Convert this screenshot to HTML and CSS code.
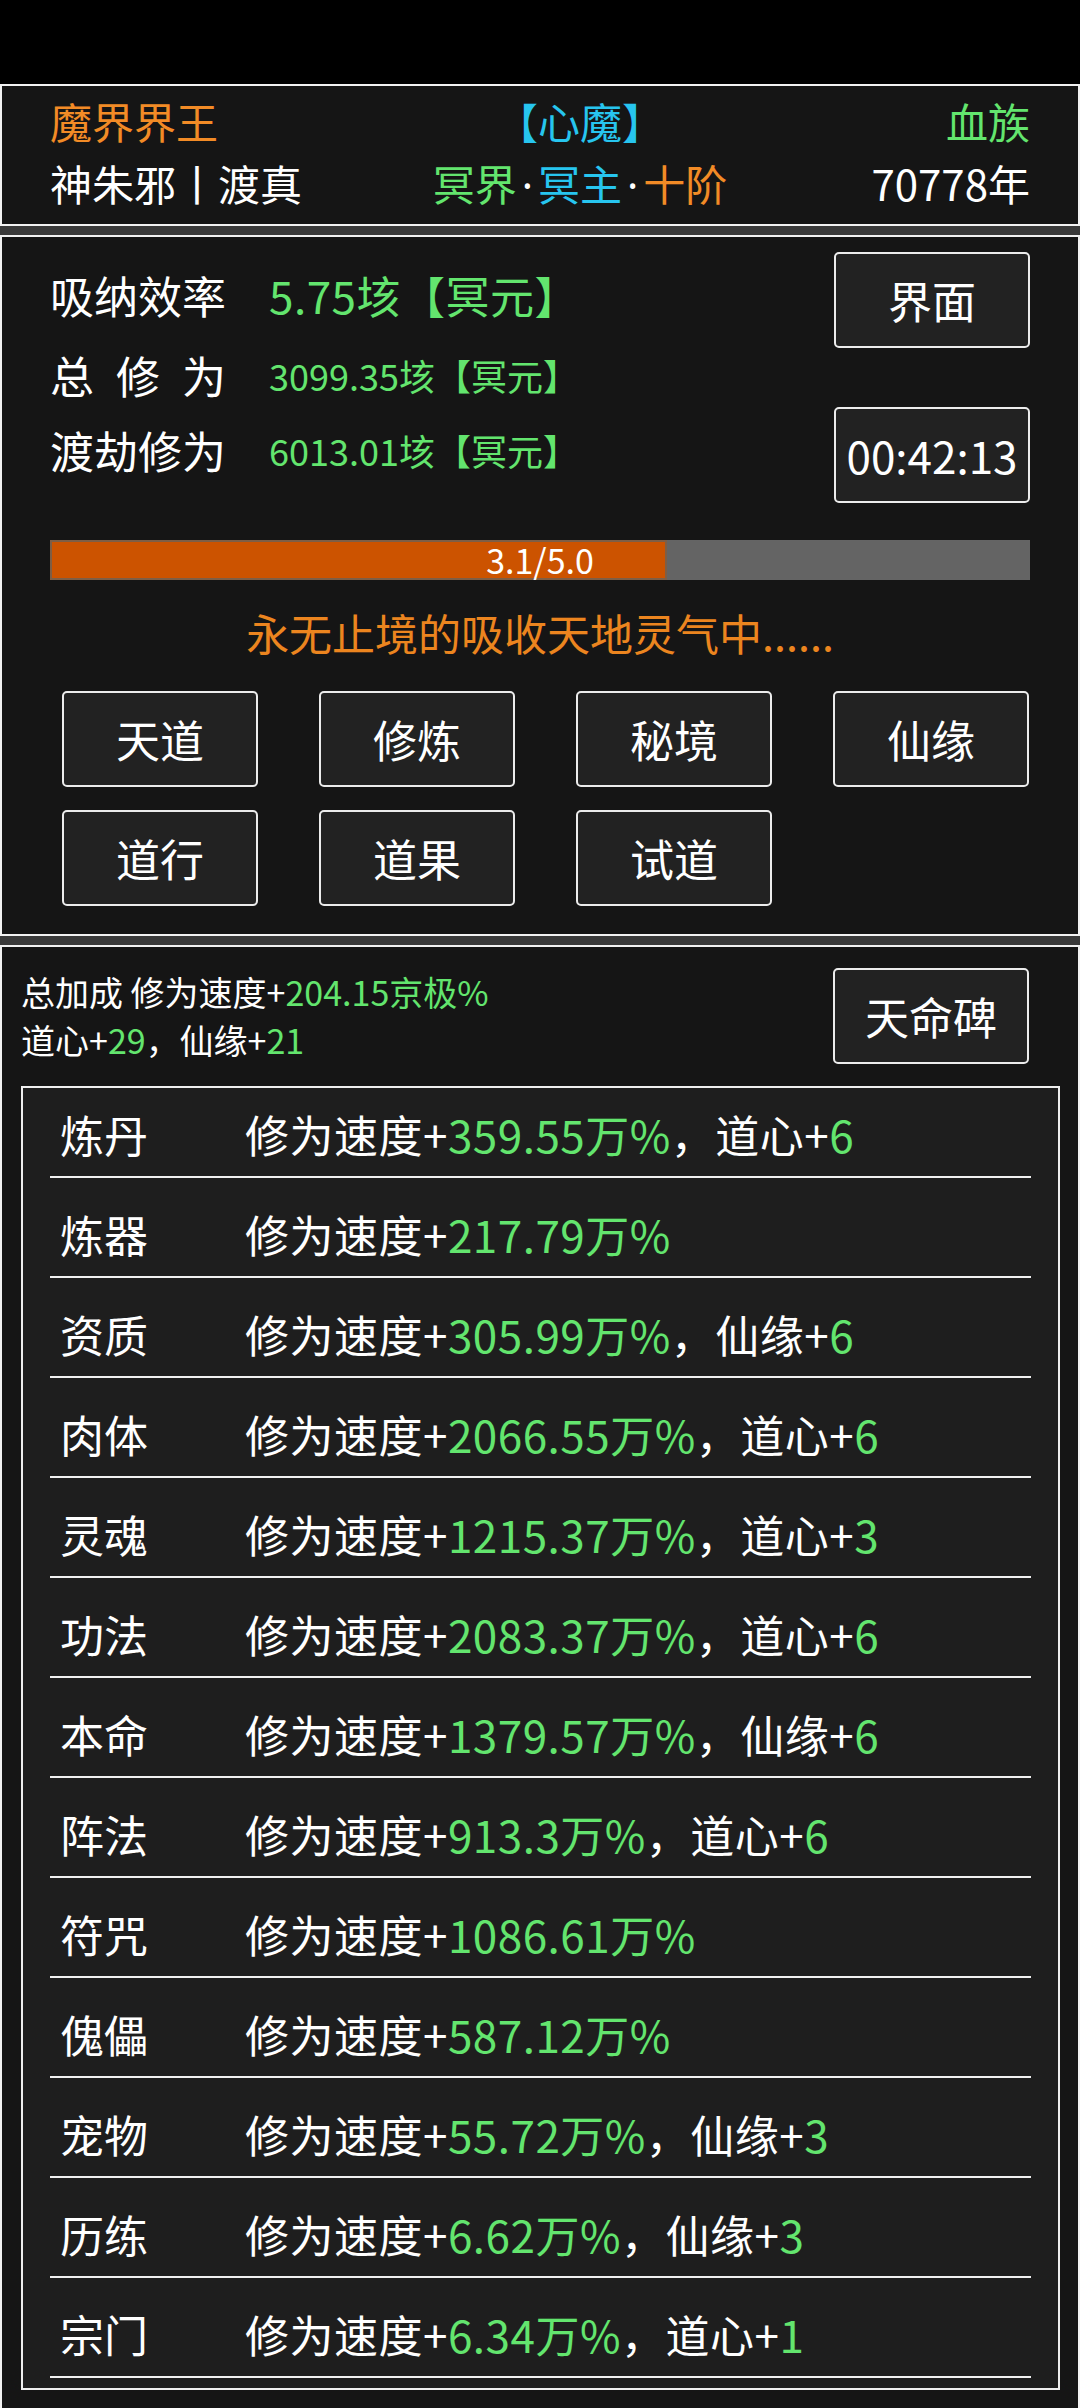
FILE: index.html
```html
<!DOCTYPE html>
<html lang="zh">
  <head>
    <meta charset="UTF-8" />
    <meta name="viewport" content="width=device-width, initial-scale=1.0" />
    <title>修炼</title>
    <link rel="stylesheet" href="styles.css">
  </head>
  <body>
    <div class="statusbar"></div>

    <div class="panel header">
      <div class="orange">魔界界王</div>
      <div class="mid cyan">【心魔】</div>
      <div class="right green">血族</div>
      <div>神朱邪丨渡真</div>
      <div class="mid"><span class="green">冥界</span><span class="dot">·</span><span class="cyan">冥主</span><span class="dot">·</span><span class="orange">十阶</span></div>
      <div class="right">70778年</div>
    </div>

    <div class="panel main">
      <div class="top">
        <div class="stats">
          <div class="stat">
            <span class="label">吸纳效率</span>
            <span class="value big">5.75垓【冥元】</span>
          </div>
          <div class="stat">
            <span class="label spread">总修为</span>
            <span class="value">3099.35垓【冥元】</span>
          </div>
          <div class="stat">
            <span class="label">渡劫修为</span>
            <span class="value">6013.01垓【冥元】</span>
          </div>
        </div>
        <div class="side">
          <button class="btn">界面</button>
          <button class="btn">00:42:13</button>
        </div>
      </div>

      <div class="bar">
        <div class="fill" style="width: 63%"></div>
        <span class="bar_text">3.1/5.0</span>
      </div>

      <div class="status">永无止境的吸收天地灵气中......</div>

      <div class="actions">
        <button class="btn">天道</button>
        <button class="btn">修炼</button>
        <button class="btn">秘境</button>
        <button class="btn">仙缘</button>
        <button class="btn">道行</button>
        <button class="btn">道果</button>
        <button class="btn">试道</button>
      </div>
    </div>

    <div class="panel bonus">
      <div class="bonus_head">
        <div class="totals">
          <div>总加成 修为速度+<span class="green">204.15京极%</span></div>
          <div>道心+<span class="green">29</span>，仙缘+<span class="green">21</span></div>
        </div>
        <button class="btn">天命碑</button>
      </div>

      <div class="list">
        <div class="row"><span class="name">炼丹</span><span class="effect">修为速度+<span class="green">359.55万%</span>，道心+<span class="green">6</span></span></div>
        <div class="row"><span class="name">炼器</span><span class="effect">修为速度+<span class="green">217.79万%</span></span></div>
        <div class="row"><span class="name">资质</span><span class="effect">修为速度+<span class="green">305.99万%</span>，仙缘+<span class="green">6</span></span></div>
        <div class="row"><span class="name">肉体</span><span class="effect">修为速度+<span class="green">2066.55万%</span>，道心+<span class="green">6</span></span></div>
        <div class="row"><span class="name">灵魂</span><span class="effect">修为速度+<span class="green">1215.37万%</span>，道心+<span class="green">3</span></span></div>
        <div class="row"><span class="name">功法</span><span class="effect">修为速度+<span class="green">2083.37万%</span>，道心+<span class="green">6</span></span></div>
        <div class="row"><span class="name">本命</span><span class="effect">修为速度+<span class="green">1379.57万%</span>，仙缘+<span class="green">6</span></span></div>
        <div class="row"><span class="name">阵法</span><span class="effect">修为速度+<span class="green">913.3万%</span>，道心+<span class="green">6</span></span></div>
        <div class="row"><span class="name">符咒</span><span class="effect">修为速度+<span class="green">1086.61万%</span></span></div>
        <div class="row"><span class="name">傀儡</span><span class="effect">修为速度+<span class="green">587.12万%</span></span></div>
        <div class="row"><span class="name">宠物</span><span class="effect">修为速度+<span class="green">55.72万%</span>，仙缘+<span class="green">3</span></span></div>
        <div class="row"><span class="name">历练</span><span class="effect">修为速度+<span class="green">6.62万%</span>，仙缘+<span class="green">3</span></span></div>
        <div class="row"><span class="name">宗门</span><span class="effect">修为速度+<span class="green">6.34万%</span>，道心+<span class="green">1</span></span></div>
      </div>
    </div>
  </body>
</html>
```

FILE: styles.css
```css
* {
  margin: 0;
  padding: 0;
  box-sizing: border-box;
}

body {
  background: #3a3a3a;
  color: #fff;
  font-family: "Noto Sans CJK SC", "Noto Sans", sans-serif;
}

.green {
  color: #63e56e;
}

.cyan {
  color: #27c5ef;
}

.orange {
  color: #f28b26;
}

.statusbar {
  height: 84px;
  background: #000;
}

.panel {
  background: #151515;
  border: 2px solid #f2f2f2;

  & + .panel {
    margin-top: 9px;
  }
}

.btn {
  width: 196px;
  height: 96px;
  background: #222;
  border: 2px solid #ececec;
  border-radius: 5px;
  color: #fff;
  font-family: inherit;
  font-size: 44px;
}

/* top panel */
.header {
  display: grid;
  grid-template-columns: 380px 300px 1fr;
  padding: 4px 48px 8px;
  font-size: 42px;
  line-height: 62px;
  white-space: nowrap;

  .mid {
    text-align: center;
  }

  .right {
    text-align: right;
  }

  .dot {
    font-family: "Noto Sans", sans-serif;
    padding: 0 5px;
  }
}

/* main panel */
.main {
  padding: 15px 48px 28px;

  .top {
    display: flex;
    justify-content: space-between;
  }

  .stats {
    padding-top: 13px;
  }

  .stat {
    display: flex;
    align-items: center;
    height: 60px;

    & + .stat {
      margin-top: 20px;
    }

    &:last-child {
      margin-top: 15px;
    }
  }

  .label {
    width: 219px;
    font-size: 44px;
  }

  .spread {
    display: inline-block;
    width: 176px;
    margin-right: 43px;
    text-align-last: justify;
  }

  .value {
    color: #63e56e;
    font-size: 36px;
  }

  .big {
    font-size: 44px;
    letter-spacing: 0.5px;
  }

  .side {
    display: flex;
    flex-direction: column;
    gap: 59px;
  }

  .bar {
    display: grid;
    margin-top: 37px;
    height: 40px;
    background: #646464;

    > * {
      grid-area: 1 / 1;
    }

    .fill {
      height: 100%;
      background: #cc5300;
      box-shadow: inset 0 0 0 2px #7e5e45;
    }

    .bar_text {
      text-align: center;
      font-size: 34px;
      line-height: 40px;
    }
  }

  .status {
    margin-top: 22px;
    text-align: center;
    font-size: 43px;
    line-height: 60px;
    color: #ec851f;
  }

  .actions {
    display: grid;
    grid-template-columns: repeat(4, 196px);
    column-gap: 61px;
    row-gap: 23px;
    margin-top: 29px;
    padding-left: 12px;
  }
}

/* bonus panel */
.bonus {
  padding: 21px 18px 20px 19px;

  .bonus_head {
    display: flex;
    justify-content: space-between;
    align-items: flex-start;
    padding-right: 31px;
  }

  .totals {
    font-size: 34px;
    line-height: 48px;
  }

  .list {
    display: flex;
    flex-direction: column;
    gap: 26px;
    margin-top: 22px;
    padding: 16px 27px 10px;
    background: #1e1e1e;
    border: 2px solid #eee;
  }

  .row {
    display: flex;
    padding: 0 0 12px 10px;
    border-bottom: 2px solid #f0f0f0;
    font-size: 44px;
    line-height: 60px;

    .name {
      width: 185px;
    }

    .effect {
      letter-spacing: 0.5px;
    }
  }
}
```
